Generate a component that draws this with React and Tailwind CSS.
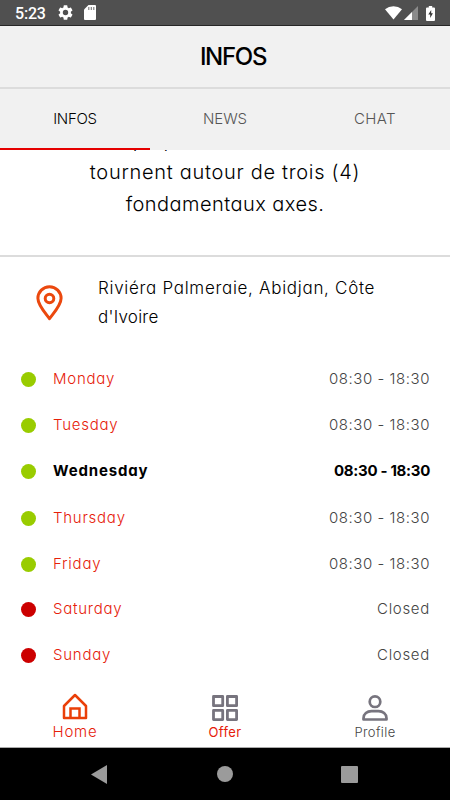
import clsx from "clsx";

const tabs = [
  { name: "INFOS", active: true, tracking: "tracking-[-0.3px]" },
  { name: "NEWS", active: false, tracking: "tracking-[-0.1px]" },
  { name: "CHAT", active: false, tracking: "tracking-[0.4px]" },
];

const openingHours = [
  { day: "Monday", hours: "08:30 - 18:30", row: "h-[45px]" },
  { day: "Tuesday", hours: "08:30 - 18:30", row: "h-[46px]" },
  { day: "Wednesday", hours: "08:30 - 18:30", today: true, row: "h-[46px]" },
  { day: "Thursday", hours: "08:30 - 18:30", row: "h-[48px]" },
  { day: "Friday", hours: "08:30 - 18:30", row: "h-[45px]" },
  { day: "Saturday", closed: true, row: "h-[45px]" },
  { day: "Sunday", closed: true, row: "h-[46px]" },
];

const StatusBar = () => (
  <div className="flex h-[26px] shrink-0 items-center justify-between border-b border-[#262626] bg-[#505050] pl-[15px] pr-[15px] text-white">
    <div className="flex items-center">
      <span className="w-[43px] pt-[2px] font-[Roboto,sans-serif] text-[16px] leading-4 font-medium tracking-[-0.2px]">
        5:23
      </span>
      <svg className="h-[15px] w-[15px]" viewBox="2 2 20 20" fill="currentColor">
        <path d="M19.14 12.94c.04-.3.06-.61.06-.94s-.02-.64-.07-.94l2.03-1.58a.49.49 0 0 0 .12-.61l-1.92-3.32a.49.49 0 0 0-.59-.22l-2.39.96a7 7 0 0 0-1.62-.94L14.4 2.81A.48.48 0 0 0 13.92 2.4h-3.84a.48.48 0 0 0-.47.41l-.36 2.54a7 7 0 0 0-1.62.94l-2.39-.96a.49.49 0 0 0-.59.22L2.73 8.87a.48.48 0 0 0 .12.61l2.03 1.58a6 6 0 0 0 0 1.88l-2.03 1.58a.49.49 0 0 0-.12.61l1.92 3.32c.12.22.37.29.59.22l2.39-.96c.5.38 1.03.7 1.62.94l.36 2.54c.05.24.24.41.48.41h3.84c.24 0 .44-.17.47-.41l.36-2.54a7 7 0 0 0 1.62-.94l2.39.96c.22.08.47 0 .59-.22l1.92-3.32a.48.48 0 0 0-.12-.61zM12 15.6a3.6 3.6 0 1 1 0-7.2 3.6 3.6 0 0 1 0 7.2z" />
      </svg>
      <svg className="ml-[11px] h-[15px] w-[12px]" viewBox="0 0 12 15">
        <path d="M4.5 0H11a1 1 0 0 1 1 1v13a1 1 0 0 1-1 1H1a1 1 0 0 1-1-1V4.5z" fill="#fff" />
        <path d="M4.800 2v3M7.300 2v3M9.800 2v3" stroke="#777" strokeWidth="1.1" />
      </svg>
    </div>
    <div className="flex items-center">
      <svg className="h-[14px] w-[17px]" viewBox="0 0 17 14">
        <path d="M0 3.200a13.500 13.500 0 0 1 17 0L8.500 13.500z" fill="#fff" />
      </svg>
      <svg className="ml-[2px] mt-px h-[14px] w-[14px]" viewBox="0 0 14 14">
        <path d="M14 0v14H0z" fill="#8b8b8b" />
        <path d="M8 6v8H0z" fill="#fff" />
      </svg>
      <svg className="ml-[8px] mt-px h-[15px] w-[9px]" viewBox="0 0 9 15">
        <path d="M2.800 0h3.400v1.400H8a1 1 0 0 1 1 1V14a1 1 0 0 1-1 1H1a1 1 0 0 1-1-1V2.400a1 1 0 0 1 1-1h1.800z" fill="#fff" />
        <path d="M5.200 4 2.300 8.500h1.900V12l2.700-4.700H5.200z" fill="#333" />
      </svg>
    </div>
  </div>
);

const PinIcon = () => (
  <svg className="h-[36px] w-[27px]" viewBox="0 0 27 36" fill="none" stroke="#eb480e">
    <path
      d="M13.500 33.700C9.500 28.200 1.900 20.300 1.900 13.300a11.600 11.600 0 0 1 23.200 0c0 7-7.600 14.900-11.600 20.400z"
      strokeWidth="3"
      strokeLinejoin="round"
    />
    <circle cx="13.500" cy="13.500" r="4.300" strokeWidth="3" />
  </svg>
);

const HomeIcon = () => (
  <svg className="h-[27px] w-[26px]" viewBox="0 0 26 27" fill="none" stroke="#ea3f08" strokeWidth="2.500">
    <path d="M2 13 13 2l11 11V25H2z" strokeLinejoin="round" />
    <path d="M8.500 25v-9.500h9V25" />
  </svg>
);

const OfferIcon = () => (
  <svg className="h-[27px] w-[27px]" viewBox="0 0 27 27" fill="none" stroke="#77747e" strokeWidth="2.800" strokeLinejoin="round">
    <path d="M1.500 1.500h9.200v9.200H1.500zM15.400 1.500h9.200v9.200h-9.200zM1.500 15.400h9.200v9.200H1.500zM15.400 15.400h9.200v9.200h-9.200z" />
  </svg>
);

const ProfileIcon = () => (
  <svg className="h-[27px] w-[26px]" viewBox="0 0 26 27" fill="none" stroke="#77747e" strokeWidth="2.700">
    <circle cx="13" cy="6.700" r="5.300" />
    <path d="M1.500 24.500v-1.200c0-4.500 3.700-7.200 8-7.200h7c4.300 0 8 2.700 8 7.200v1.200z" strokeLinejoin="round" />
  </svg>
);

const HoursRow = ({ item }) => {
  const { day, hours, today, closed, row } = item;

  return (
    <div className={clsx("flex items-center justify-between pl-[21px] pr-[20px] text-[15px]", row)}>
      <div className="flex items-center">
        <span className={clsx("h-[15px] w-[15px] rounded-full", closed ? "bg-[#cc0000]" : "bg-[#99cc00]")} />
        <span
          className={clsx(
            "ml-[17px]",
            today ? "font-bold tracking-[0.85px] text-black" : "font-light tracking-[0.75px] text-[#e6200a]"
          )}
        >
          {day}
        </span>
      </div>
      <span
        className={clsx(
          today ? "font-bold tracking-[-0.3px] text-black" : "font-light text-[#444]",
          !today && (closed ? "tracking-[0.7px]" : "tracking-[0.55px]")
        )}
      >
        {closed ? "Closed" : hours}
      </span>
    </div>
  );
};

const BottomTabs = () => (
  <nav className="grid h-[61px] grid-cols-3 border-b border-[#aaa] font-light">
    <div className="flex flex-col items-center pt-[6px]">
      <HomeIcon />
      <span className="mt-[3px] text-[15px] leading-[18px] tracking-[0.8px] text-[#e6200a]">Home</span>
    </div>
    <div className="flex flex-col items-center pt-[8px]">
      <OfferIcon />
      <span className="mt-px text-[13px] leading-[18px] font-normal tracking-[0.4px] text-[#e6200a]">Offer</span>
    </div>
    <div className="flex flex-col items-center pt-[8px]">
      <ProfileIcon />
      <span className="mt-px text-[13px] leading-[18px] tracking-[0.4px] text-[#444]">Profile</span>
    </div>
  </nav>
);

const SystemNav = () => (
  <div className="grid h-[52px] grid-cols-3 place-items-center bg-black">
    <svg className="ml-[48px] h-[19px] w-[16px]" viewBox="0 0 16 19" fill="#9b9b9b">
      <path d="M16 0v19L0 9.500z" />
    </svg>
    <div className="h-4 w-4 rounded-full bg-[#9b9b9b]" />
    <div className="mr-[52px] h-[17px] w-[17px] rounded-[1px] bg-[#9b9b9b]" />
  </div>
);

const App = () => {
  return (
    <div className="flex h-[800px] w-[450px] flex-col overflow-hidden bg-white font-[Inter,sans-serif] text-black [font-feature-settings:'cv11']">
      <StatusBar />

      <header className="flex h-[63px] shrink-0 items-center justify-center border-b-2 border-[#dcdcdc] bg-[#f1f1f1] pl-[16px] text-[24px] font-medium tracking-[-1.3px]">
        INFOS
      </header>

      <div className="grid h-[61px] shrink-0 grid-cols-3 bg-[#f1f1f1] text-[15px] font-light">
        {tabs.map((tab) => (
          <div
            key={tab.name}
            className={clsx(
              "flex items-center justify-center border-b-2 pt-[2px]",
              tab.tracking,
              tab.active ? "border-[#e50000] text-black" : "border-transparent text-[#555]"
            )}
          >
            {tab.name}
          </div>
        ))}
      </div>

      {/* Description, scrolled under the tabs */}
      <section className="flex h-[107px] shrink-0 flex-col justify-end overflow-hidden border-b-2 border-[#dcdcdc] pb-[35px] text-center text-[20px] leading-8 font-light">
        <p>Nos propositions de services</p>
        <p className="tracking-[0.7px]">tournent autour de trois (4)</p>
        <p className="tracking-[0.45px]">fondamentaux axes.</p>
      </section>

      <section className="flex h-[100px] shrink-0 pt-[17px]">
        <div className="w-[98px] pl-[35.5px] pt-[11px]">
          <PinIcon />
        </div>
        <p className="w-[300px] text-[17px] leading-[29px] font-light tracking-[0.7px]">
          Riviéra Palmeraie, Abidjan, Côte
          <br />
          <span className="tracking-[0.25px]">d'Ivoire</span>
        </p>
      </section>

      <section className="h-[330px] shrink-0">
        {openingHours.map((item) => (
          <HoursRow key={item.day} item={item} />
        ))}
      </section>

      <BottomTabs />
      <SystemNav />
    </div>
  );
};

export default App;
